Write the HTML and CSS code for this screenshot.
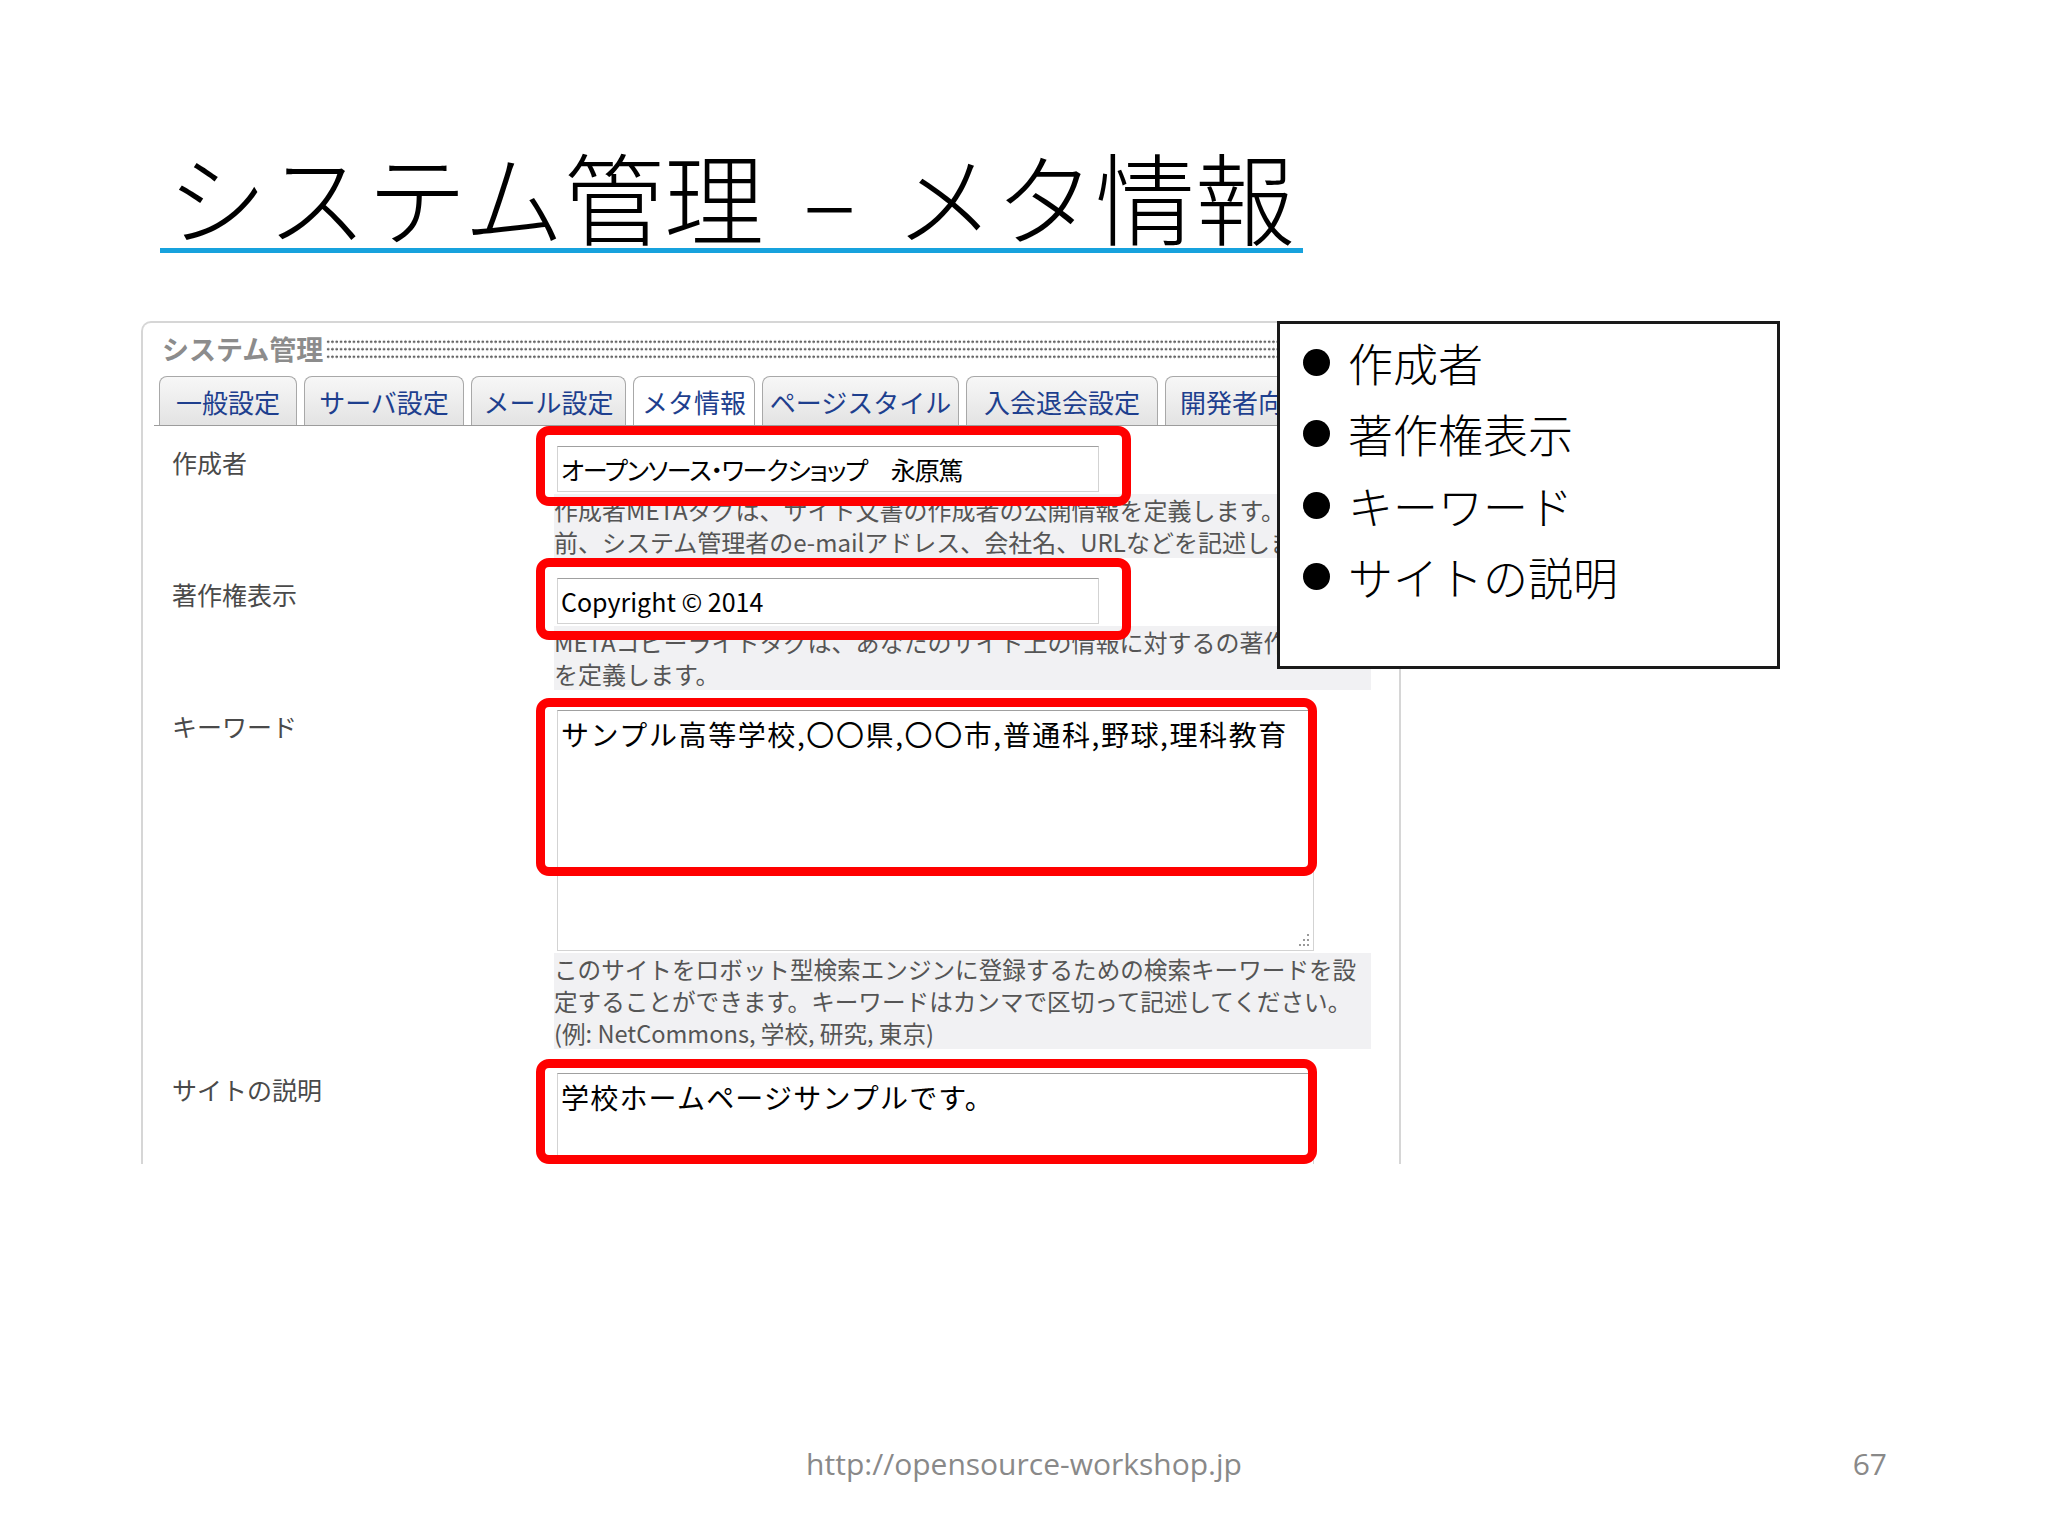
FILE: index.html
```html
<!DOCTYPE html>
<html lang="ja">
<head>
<meta charset="utf-8">
<title>システム管理 – メタ情報</title>
<link rel="stylesheet" href="styles.css">
</head>
<body>
<div class="slide">
  <h1 class="title">システム管理<span class="dash">–</span>メタ情報</h1>

  <div class="panel">
    <div class="panel-head">
      <span class="panel-name">システム管理</span>
      <div class="dots"></div>
    </div>
    <div class="tabs">
      <div class="tab t1">一般設定</div>
      <div class="tab t2">サーバ設定</div>
      <div class="tab t3">メール設定</div>
      <div class="tab t4 active">メタ情報</div>
      <div class="tab t5">ページスタイル</div>
      <div class="tab t6">入会退会設定</div>
      <div class="tab t7">開発者向け</div>
    </div>
    <div class="form">
      <div class="row">
        <div class="label">作成者</div>
        <div class="ctrl">
          <div class="field short author">オープンソース・ワークショップ　永原篤</div>
          <div class="help">作成者METAタグは、サイト文書の作成者の公開情報を定義します。作成者の名<br>前、システム管理者のe-mailアドレス、会社名、URLなどを記述します。</div>
        </div>
      </div>
      <div class="row">
        <div class="label">著作権表示</div>
        <div class="ctrl">
          <div class="field short">Copyright © 2014</div>
          <div class="help">METAコピーライトタグは、あなたのサイト上の情報に対するの著作権<br>を定義します。</div>
        </div>
      </div>
      <div class="row">
        <div class="label">キーワード</div>
        <div class="ctrl">
          <div class="field tall kw">サンプル高等学校,〇〇県,〇〇市,普通科,野球,理科教育
            <svg class="grip" width="16" height="16" viewBox="0 0 16 16">
              <g fill="#9a9a9a">
                <rect x="13" y="3" width="2" height="2"/>
                <rect x="13" y="8" width="2" height="2"/>
                <rect x="9" y="8" width="2" height="2"/>
                <rect x="13" y="13" width="2" height="2"/>
                <rect x="9" y="13" width="2" height="2"/>
                <rect x="5" y="13" width="2" height="2"/>
              </g>
            </svg>
          </div>
          <div class="help small">このサイトをロボット型検索エンジンに登録するための検索キーワードを設<br>定することができます。キーワードはカンマで区切って記述してください。<br>(例: NetCommons, 学校, 研究, 東京)</div>
        </div>
      </div>
      <div class="row last">
        <div class="label">サイトの説明</div>
        <div class="ctrl">
          <div class="field desc">学校ホームページサンプルです。</div>
        </div>
      </div>
    </div>
  </div>

  <div class="mark m1"></div>
  <div class="mark m2"></div>
  <div class="mark m3"></div>
  <div class="mark m4"></div>

  <div class="callout">
    <ul class="bullets">
      <li>作成者</li>
      <li>著作権表示</li>
      <li>キーワード</li>
      <li>サイトの説明</li>
    </ul>
  </div>

  <footer class="footer">
    <span></span>
    <span class="url">http://opensource-workshop.jp</span>
    <span class="pageno">67</span>
  </footer>
</div>
</body>
</html>
```

FILE: styles.css
```css
html, body {
  margin: 0;
  padding: 0;
  background: #ffffff;
}

.slide {
  position: relative;
  width: 2048px;
  height: 1536px;
  overflow: hidden;
  display: flex;
  flex-direction: column;
  align-items: flex-start;
  font-family: "Noto Sans CJK JP", "Noto Sans", sans-serif;
  color: #000;
}

/* ---------- title ---------- */
.title {
  margin: 141px 0 0 160px;
  width: 1143px;
  box-sizing: border-box;
  padding-left: 7px;
  font-size: 100px;
  line-height: 107px;
  font-weight: 300;
  white-space: nowrap;
  border-bottom: 5px solid #17a2dd;
}

.title .dash {
  display: inline-block;
  width: 131px;
  text-align: center;
}

/* ---------- panel ---------- */
.panel {
  margin: 68px 0 0 141px;
  width: 1260px;
  height: 843px;
  box-sizing: border-box;
  border: 2px solid #d6d6d6;
  border-bottom: none;
  border-radius: 10px 10px 0 0;
  overflow: hidden;
  background: #fff;
}

.panel-head {
  display: flex;
  align-items: center;
  height: 28px;
  padding: 12px 0 0 19px;
}

.panel-name {
  font-size: 27px;
  line-height: 28px;
  font-weight: bold;
  color: #8c8c8c;
  white-space: nowrap;
}

.dots {
  flex: 1;
  height: 22.5px;
  margin: 0 12px 0 3px;
  background-image: radial-gradient(circle, #666 1.1px, transparent 1.6px);
  background-size: 4.3px 7.5px;
}

.tabs {
  display: flex;
  gap: 7px;
  height: 49px;
  margin: 13px 12px 0 11px;
  padding-left: 5px;
  border-bottom: 1px solid #9c9c9c;
}

.tab {
  height: 49px;
  box-sizing: border-box;
  flex: none;
  display: flex;
  align-items: center;
  justify-content: center;
  border: 1px solid #a8a8a8;
  border-bottom: none;
  border-radius: 8px 8px 0 0;
  background: linear-gradient(#f7f7f7, #e3e3e3);
  color: #1e3f8e;
  font-size: 26px;
  white-space: nowrap;
  overflow: hidden;
}

.tab.active {
  background: #ffffff;
}

.t1 { width: 138px; }
.t2 { width: 160px; }
.t3 { width: 155px; }
.t4 { width: 122px; }
.t5 { width: 197px; }
.t6 { width: 192px; }
.t7 { width: 170px; justify-content: flex-start; padding-left: 14px; }

/* ---------- form ---------- */
.form {
  padding-left: 29px;
}

.row {
  display: grid;
  grid-template-columns: 382px 817px;
  padding-top: 20px;
}

.row.last {
  padding-top: 24px;
}

.label {
  font-size: 25px;
  line-height: 32px;
  color: #4a4a4a;
  white-space: nowrap;
}

.field {
  position: relative;
  margin-left: 3px;
  box-sizing: border-box;
  border: 1px solid #d3d3d3;
  border-top-color: #a0a0a0;
  background: #fff;
  color: #000;
  padding: 0 3px;
  white-space: nowrap;
}

.field.short {
  width: 542px;
  height: 46px;
  font-size: 25px;
  line-height: 44px;
}

.field.author {
  font-feature-settings: "palt";
  letter-spacing: -1.2px;
}

.field.tall,
.field.desc {
  width: 757px;
  padding-top: 6px;
  font-size: 28px;
  line-height: 34px;
}

.field.tall {
  height: 241px;
}

.field.kw {
  letter-spacing: 1.6px;
}

.field.desc {
  height: 200px;
  letter-spacing: 1.2px;
}

.grip {
  position: absolute;
  right: 3px;
  bottom: 3px;
}

.help {
  margin-top: 2px;
  background: #f1f1f3;
  color: #555;
  font-size: 24px;
  line-height: 32px;
  white-space: nowrap;
  overflow: hidden;
}

.help.small {
  font-size: 23.6px;
}

/* ---------- red markers ---------- */
.mark {
  position: absolute;
  box-sizing: border-box;
  border: 9px solid #ff0000;
  border-radius: 13px;
}

.m1 { left: 536px; top: 426px; width: 595px; height: 80px; }
.m2 { left: 536px; top: 558px; width: 595px; height: 82px; }
.m3 { left: 536px; top: 698px; width: 781px; height: 178px; }
.m4 { left: 536px; top: 1059px; width: 781px; height: 105px; }

/* ---------- callout ---------- */
.callout {
  position: absolute;
  left: 1277px;
  top: 321px;
  width: 503px;
  height: 348px;
  box-sizing: border-box;
  border: 3px solid #1a1a1a;
  background: #fff;
}

.bullets {
  list-style: none;
  margin: 0;
  padding: 3px 0 0 0;
}

.bullets li {
  display: flex;
  align-items: center;
  height: 71.3px;
  font-size: 45px;
  font-weight: 300;
  white-space: nowrap;
}

.bullets li::before {
  content: "";
  flex: none;
  width: 27px;
  height: 27px;
  border-radius: 50%;
  background: #000;
  margin: 0 18px 0 23px;
}

/* ---------- footer ---------- */
.footer {
  margin-top: auto;
  align-self: stretch;
  display: grid;
  grid-template-columns: 1fr auto 1fr;
  align-items: center;
  height: 40px;
  padding: 0 161px 53px 161px;
  font-family: "Open Sans", "Liberation Sans", sans-serif;
  font-size: 30px;
  color: #898989;
}

.footer .pageno {
  justify-self: end;
}
```
